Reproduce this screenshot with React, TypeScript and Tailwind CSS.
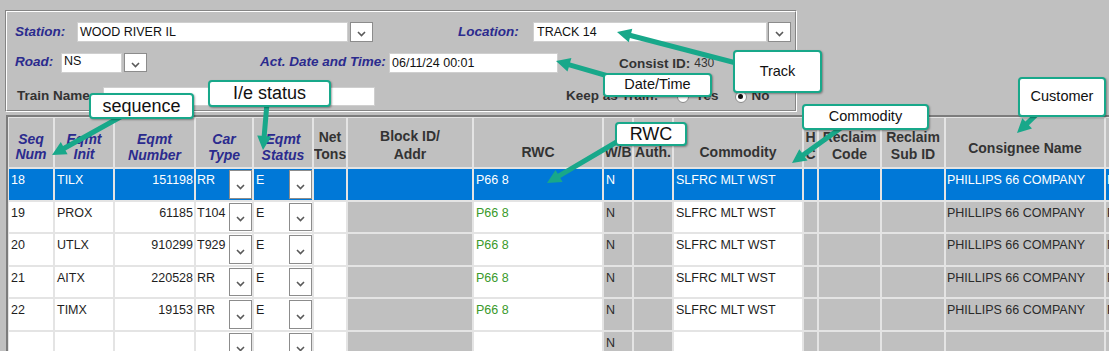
import React from 'react';

type Pt = [number, number];

const TEAL = '#18a88a';

// polygon for a thick arrow from tail to tip
function arrowPoints(tail: Pt, tip: Pt, shaft = 5, headLen = 14, headW = 14) {
  const dx = tip[0] - tail[0];
  const dy = tip[1] - tail[1];
  const len = Math.hypot(dx, dy);
  const ux = dx / len;
  const uy = dy / len;
  const nx = -uy;
  const ny = ux;
  const bx = tip[0] - ux * headLen;
  const by = tip[1] - uy * headLen;
  const p = (x: number, y: number) => `${x.toFixed(1)},${y.toFixed(1)}`;
  return [
    p(tail[0] + (nx * shaft) / 2, tail[1] + (ny * shaft) / 2),
    p(bx + (nx * shaft) / 2, by + (ny * shaft) / 2),
    p(bx + (nx * headW) / 2, by + (ny * headW) / 2),
    p(tip[0], tip[1]),
    p(bx - (nx * headW) / 2, by - (ny * headW) / 2),
    p(bx - (nx * shaft) / 2, by - (ny * shaft) / 2),
    p(tail[0] - (nx * shaft) / 2, tail[1] - (ny * shaft) / 2),
  ].join(' ');
}

const arrows: [Pt, Pt][] = [
  [[124, 115], [52, 155]],
  [[267, 103], [263, 150]],
  [[615, 78], [556, 61]],
  [[740, 64], [617, 32]],
  [[620, 140], [547, 183]],
  [[845, 125], [792, 163]],
  [[1038, 113], [1017, 133]],
];

const callouts = [
  { text: 'sequence', cls: 'left-[89px] top-[93px] w-[105px] h-[26px] text-[18px]' },
  { text: 'I/e status', cls: 'left-[208px] top-[80px] w-[123px] h-[27px] text-[18px]' },
  { text: 'Date/Time', cls: 'left-[603px] top-[73px] w-[109px] h-[24px] text-[14.5px]' },
  { text: 'Track', cls: 'left-[733px] top-[50px] w-[89px] h-[43px] text-[14.5px]' },
  { text: 'RWC', cls: 'left-[615px] top-[122px] w-[72px] h-[24px] text-[18px]' },
  { text: 'Commodity', cls: 'left-[802px] top-[104px] w-[127px] h-[26px] text-[14.5px]' },
  { text: 'Customer', cls: 'left-[1018px] top-[77px] w-[88px] h-[40px] text-[14.5px]' },
];

const headers: { lines: string[]; italic?: boolean; pb: string }[] = [
  { lines: ['Seq', 'Num'], italic: true, pb: 'pb-[5px] leading-[15px]' },
  { lines: ['Eqmt', 'Init'], italic: true, pb: 'pb-[5px] leading-[15px]' },
  { lines: ['Eqmt', 'Number'], italic: true, pb: 'pb-[4px] leading-[16px]' },
  { lines: ['Car', 'Type'], italic: true, pb: 'pb-[4px] leading-[16px]' },
  { lines: ['Eqmt', 'Status'], italic: true, pb: 'pb-[4px] leading-[16px]' },
  { lines: ['Net', 'Tons'], pb: 'pb-[4px] leading-[17px]' },
  { lines: ['Block ID/', 'Addr'], pb: 'pb-[4px] leading-[18px]' },
  { lines: ['RWC'], pb: 'pb-[6px] leading-[17px]' },
  { lines: ['W/B'], pb: 'pb-[6px] leading-[17px]' },
  { lines: ['Auth.'], pb: 'pb-[6px] leading-[17px]' },
  { lines: ['Commodity'], pb: 'pb-[6px] leading-[17px]' },
  { lines: ['H', 'C'], pb: 'pb-[4px] leading-[17px]' },
  { lines: ['Reclaim', 'Code'], pb: 'pb-[4px] leading-[17px]' },
  { lines: ['Reclaim', 'Sub ID'], pb: 'pb-[4px] leading-[17px]' },
  { lines: ['Consignee Name'], pb: 'pb-[10px] leading-[17px]' },
  { lines: [''], pb: 'pb-[4px]' },
];

type Row = {
  seq?: string;
  init?: string;
  num?: string;
  car?: string;
  st?: string;
  rwc?: string;
  wb?: string;
  com?: string;
  cons?: string;
  sel?: boolean;
};

const rows: Row[] = [
  { seq: '18', init: 'TILX', num: '151198', car: 'RR', st: 'E', rwc: 'P66 8', wb: 'N', com: 'SLFRC MLT WST', cons: 'PHILLIPS 66 COMPANY', sel: true },
  { seq: '19', init: 'PROX', num: '61185', car: 'T104', st: 'E', rwc: 'P66 8', wb: 'N', com: 'SLFRC MLT WST', cons: 'PHILLIPS 66 COMPANY' },
  { seq: '20', init: 'UTLX', num: '910299', car: 'T929', st: 'E', rwc: 'P66 8', wb: 'N', com: 'SLFRC MLT WST', cons: 'PHILLIPS 66 COMPANY' },
  { seq: '21', init: 'AITX', num: '220528', car: 'RR', st: 'E', rwc: 'P66 8', wb: 'N', com: 'SLFRC MLT WST', cons: 'PHILLIPS 66 COMPANY' },
  { seq: '22', init: 'TIMX', num: '19153', car: 'RR', st: 'E', rwc: 'P66 8', wb: 'N', com: 'SLFRC MLT WST', cons: 'PHILLIPS 66 COMPANY' },
  { wb: 'N' },
];

function Chevron() {
  return (
    <svg width="9" height="6" viewBox="0 0 9 6" className="block">
      <polyline points="1,1 4.5,4.5 8,1" fill="none" stroke="#5a5a5a" strokeWidth="1.6" />
    </svg>
  );
}

function DropBtn({ className = '' }: { className?: string }) {
  return (
    <div className={`flex items-center justify-center pt-[4px] bg-white border border-[#8c8c8c] ${className}`}>
      <Chevron />
    </div>
  );
}

function DataRow({ r }: { r: Row }) {
  const sel = !!r.sel;
  const input = sel ? 'bg-[#0078d7] text-white' : 'bg-white text-[#1e1e1e]';
  const plain = sel ? 'bg-[#0078d7] text-white' : 'bg-[#c0c0c0] text-[#2a2a2a]';
  const cell = 'pt-[4px] leading-[14px] text-[12.5px] whitespace-nowrap overflow-hidden';
  const dropBg = sel ? 'bg-[#0078d7]' : 'bg-white';
  return (
    <>
      <div className={`${cell} ${input} pl-[2px]`}>{r.seq}</div>
      <div className={`${cell} ${input} pl-[2px]`}>{r.init}</div>
      <div className={`${cell} ${input} pr-[1px] text-right`}>{r.num}</div>
      <div className="flex">
        <div className={`${cell} ${input} w-[33px] pl-[1px]`}>{r.car}</div>
        <div className={`${dropBg} flex-1 py-[1px]`}>
          <DropBtn className="h-full" />
        </div>
      </div>
      <div className="flex">
        <div className={`${cell} ${input} w-[35px] pl-[2px]`}>{r.st}</div>
        <div className={`${dropBg} flex-1 py-[1px]`}>
          <DropBtn className="h-full" />
        </div>
      </div>
      <div className={`${cell} ${input}`} />
      <div className={`${cell} ${plain}`} />
      <div className={`${cell} ${sel ? 'bg-[#0078d7] text-white' : 'bg-white text-[#3a9a2b]'} pl-[2px]`}>{r.rwc}</div>
      <div className={`${cell} ${plain} pl-[2px]`}>{r.wb}</div>
      <div className={`${cell} ${plain}`} />
      <div className={`${cell} ${input} pl-[2px]`}>{r.com}</div>
      <div className={`${cell} ${plain}`} />
      <div className={`${cell} ${plain}`} />
      <div className={`${cell} ${plain}`} />
      <div className={`${cell} ${plain} pl-[1px]`}>{r.cons}</div>
      <div className={`${cell} ${plain} pl-[1px]`}>{r.cons}</div>
    </>
  );
}

export default function App() {
  const label = 'text-[13.5px] font-bold italic text-[#2b2b8e] whitespace-nowrap';
  const plainLabel = 'text-[13.5px] font-bold text-[#333333] whitespace-nowrap';
  const field = 'bg-white border border-[#cfcfcf] text-[12.5px] text-[#111111] pl-[2px] leading-[14px] whitespace-nowrap';

  return (
    <div className="relative w-[1109px] h-[351px] overflow-hidden bg-[#c0c0c0] font-['Liberation_Sans',Arial,sans-serif]">
      {/* header form */}
      <div className="ml-[5px] mt-[10px] w-[792px] h-[102px] border border-t-[#858585] border-l-[#858585] border-b-white border-r-white">
        <div className="h-full border border-t-white border-l-white border-b-[#858585] border-r-[#858585] pl-[8px] pt-[10px]">
          <div className="flex items-center h-[20px]">
            <span className={`${label} w-[62px]`}>Station:</span>
            <div className={`${field} w-[271px] h-[20px] pt-[2px]`}>WOOD RIVER IL</div>
            <DropBtn className="ml-[2px] w-[23px] h-[20px]" />
            <span className={`${label} ml-[85px] w-[75px]`}>Location:</span>
            <div className={`${field} w-[234px] h-[20px] pt-[2px] pl-[3px]`}>TRACK 14</div>
            <DropBtn className="ml-[1px] w-[23px] h-[20px]" />
          </div>

          <div className="flex items-center h-[21px] mt-[10px]">
            <span className={`${label} w-[46px]`}>Road:</span>
            <div className={`${field} w-[61px] h-[20px] pt-[0px]`}>NS</div>
            <DropBtn className="ml-[2px] w-[23px] h-[19px]" />
            <span className={`${label} ml-[113px] w-[129px]`}>Act. Date and Time:</span>
            <div className={`${field} w-[169px] h-[20px] pt-[2px]`}>06/11/24 00:01</div>
            <span className={`${plainLabel} ml-[61px] mt-[3px]`}>Consist ID:</span>
            <span className="ml-[4px] text-[12px] text-[#333333]">430</span>
          </div>

          <div className="flex items-center h-[19px] mt-[14px]">
            <span className={`${plainLabel} ml-[2px] w-[86px]`}>Train Name</span>
            <div className={`${field} w-[272px] h-[19px]`} />
            <span className={`${plainLabel} ml-[191px]`}>Keep as Train:</span>
            <span className="ml-[19px] w-[12px] h-[12px] rounded-full border border-[#8a8a8a] bg-white" />
            <span className={`${plainLabel} ml-[6px]`}>Yes</span>
            <span className="ml-[16px] w-[12px] h-[12px] rounded-full border border-[#8a8a8a] bg-white flex items-center justify-center">
              <span className="w-[5px] h-[5px] rounded-full bg-[#111111]" />
            </span>
            <span className={`${plainLabel} ml-[5px]`}>No</span>
          </div>
        </div>
      </div>

      {/* car grid */}
      <div className="mt-[3px] ml-[6px] w-max border-t-2 border-l-2 border-[#7c7c7c] pt-[1px] pl-[1px] bg-[#e4e4e4]">
        <div className="grid grid-cols-[44px_58px_79px_56px_58px_32px_124px_128px_28px_38px_128px_13px_61px_62px_158px_60px] grid-rows-[49px_31px_30px_31px_30px_31px_30px] gap-[2px]">
          {headers.map((h, i) => (
            <div
              key={i}
              className={`bg-[#c0c0c0] flex flex-col justify-end items-center text-center text-[14px] font-bold whitespace-nowrap overflow-hidden ${h.pb} ${
                h.italic ? 'italic text-[#2b2b8e]' : 'text-[#333333]'
              }`}
            >
              {h.lines.map((l, j) => (
                <span key={j}>{l}</span>
              ))}
            </div>
          ))}
          {rows.map((r, i) => (
            <DataRow key={i} r={r} />
          ))}
        </div>
      </div>

      {/* callout arrows */}
      <svg className="absolute left-0 top-0 pointer-events-none" width="1109" height="351" viewBox="0 0 1109 351">
        {arrows.map(([a, b], i) => (
          <polygon key={i} points={arrowPoints(a, b)} fill={TEAL} />
        ))}
      </svg>

      {callouts.map((c) => (
        <div
          key={c.text}
          className={`absolute ${c.cls} bg-white border-2 border-[#18a88a] rounded-[4px] flex items-center justify-center text-[#111111] shadow-[1px_1px_2px_rgba(0,0,0,0.35)]`}
        >
          {c.text}
        </div>
      ))}
    </div>
  );
}
